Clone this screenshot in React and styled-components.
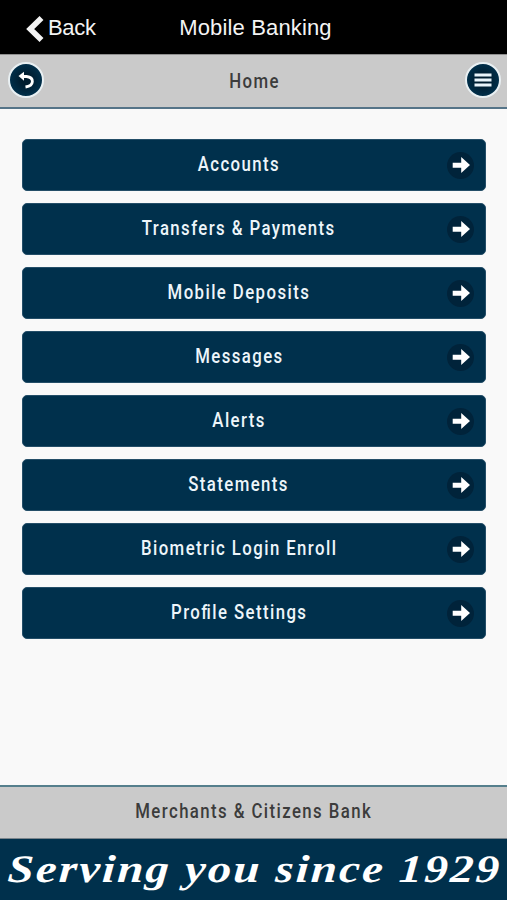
import React from 'react'
import styled, {createGlobalStyle} from 'styled-components'

const GlobalStyle = createGlobalStyle`
    * {
        box-sizing: border-box;
    }
    body {
        margin: 0;
        background-color: #f9f9f9;
    }
`

const Wrapper = styled.div`
    display: flex;
    flex-direction: column;
    height: 100vh;
    overflow: hidden;
    background-color: #f9f9f9;
`

const TopBar = styled.header`
    display: grid;
    grid-template-columns: 1fr auto 1fr;
    align-items: center;
    height: 54px;
    padding: 1px 0 0 26px;
    background-color: #000;
    color: #f4f4f4;
    font-family: 'Liberation Sans', Arial, sans-serif;
    font-size: 22px;
`

const BackButton = styled.button`
    display: flex;
    align-items: center;
    padding: 0;
    border: 0;
    background: none;
    color: inherit;
    font: inherit;
    letter-spacing: -0.3px;
    cursor: pointer;
    svg {
        margin: 3px 4px 0 0;
    }
`

const AppTitle = styled.h1`
    margin: 0;
    font-size: 22px;
    font-weight: 400;
    letter-spacing: 0.15px;
    transform: translateX(-11px);
`

const PageBar = styled.div`
    display: flex;
    align-items: center;
    justify-content: space-between;
    height: 55px;
    padding: 0 6.5px 2px 7.5px;
    border-top: 1px solid #8f8f8f;
    border-bottom: 2px solid #557488;
    background-color: #cacaca;
`

const RoundButton = styled.button`
    display: flex;
    align-items: center;
    justify-content: center;
    width: 36px;
    height: 36px;
    padding: 0;
    border: 2px solid #e9f0f3;
    border-radius: 50%;
    background: radial-gradient(#001c2e 20%, #00304c 75%);
    cursor: pointer;
`

// Condensed face made from the regular Roboto
const Label = styled.span`
    display: inline-block;
    font-family: 'Roboto', sans-serif;
    font-size: 19.5px;
    font-weight: 500;
    line-height: 24px;
    letter-spacing: 1.65px;
    white-space: nowrap;
    color: ${props => props.$light ? '#edf5fa' : '#3c3c3c'};
    transform: scaleX(0.86);
`

const PageTitle = styled(Label)`
    margin-top: 3px;
`

// closes the gap of the f and i pair
const Tight = styled.span`
    letter-spacing: -0.7px;
`

const Menu = styled.nav`
    display: flex;
    flex: 1;
    flex-direction: column;
    gap: 12px;
    padding: 30px 21px 0 22px;
`

const MenuButton = styled.button`
    display: grid;
    grid-template-columns: 20px 1fr 50px;
    align-items: center;
    justify-items: center;
    height: 52px;
    padding: 0;
    border: 1px solid #244e68;
    border-radius: 5px;
    background-color: #00304c;
    cursor: pointer;
    ${Label} {
        grid-column: 2;
    }
`

const ArrowBadge = styled.span`
    display: flex;
    width: 27px;
    height: 27px;
    border-radius: 50%;
    background-color: #00233a;
`

const BankBar = styled.div`
    display: flex;
    justify-content: center;
    height: 54px;
    padding-top: 13px;
    border-top: 2px solid #557f8c;
    border-bottom: 1px solid #7b858c;
    background-color: #cacaca;
`

const Slogan = styled.footer`
    display: flex;
    justify-content: center;
    height: 61px;
    background-color: #00304c;
    color: #fff;
    font-family: 'Liberation Serif', 'Times New Roman', serif;
    font-size: 39px;
    font-style: italic;
    font-weight: 700;
    line-height: 59px;
    white-space: nowrap;
    span {
        letter-spacing: 1.8px;
        transform: translateX(1px) scaleX(1.2) skewX(-3deg);
    }
`

const menuItems = [
    {id: 'accounts', label: 'Accounts'},
    {id: 'transfers', label: 'Transfers & Payments'},
    {id: 'deposits', label: 'Mobile Deposits'},
    {id: 'messages', label: 'Messages'},
    {id: 'alerts', label: 'Alerts'},
    {id: 'statements', label: 'Statements'},
    {id: 'biometric', label: 'Biometric Login Enroll'},
    {id: 'profile', label: <>Pro<Tight>f</Tight>ile Settings</>},
]

function App() {
    return (
        <Wrapper>
            <GlobalStyle />
            <TopBar>
                <BackButton>
                    <svg width="18" height="26" viewBox="0 0 18 26">
                        <path d="M15.5 2 L4.2 13 L15.5 24" fill="none" stroke="#f4f4f4" strokeWidth="5.6" />
                    </svg>
                    Back
                </BackButton>
                <AppTitle>Mobile Banking</AppTitle>
            </TopBar>
            <PageBar>
                <RoundButton aria-label="Back">
                    <svg width="18" height="18" viewBox="0 0 18 18">
                        <path d="M5 5.5 H9.5 C17.5 6.5 17.5 14.5 8.5 16" fill="none" stroke="#fff" strokeWidth="2.8" />
                        <path d="M1.5 5 L7 0.8 V9.8 Z" fill="#fff" />
                    </svg>
                </RoundButton>
                <PageTitle>Home</PageTitle>
                <RoundButton aria-label="Menu">
                    <svg width="18" height="14" viewBox="0 0 18 14">
                        <path d="M0.5 2 H17.5 M0.5 7 H17.5 M0.5 12 H17.5" stroke="#e9f5fb" strokeWidth="2.8" />
                    </svg>
                </RoundButton>
            </PageBar>
            <Menu>
                {menuItems.map(item => (
                    <MenuButton key={item.id}>
                        <Label $light>{item.label}</Label>
                        <ArrowBadge>
                            <svg width="27" height="27" viewBox="0 0 27 27">
                                <path d="M5.7 10.7 H14.2 V5 L23 13 L14.2 21 V15.7 H5.7 Z" fill="#fff" />
                            </svg>
                        </ArrowBadge>
                    </MenuButton>
                ))}
            </Menu>
            <BankBar>
                <Label>Merchants &amp; Citizens Bank</Label>
            </BankBar>
            <Slogan><span>Serving you since 1929</span></Slogan>
        </Wrapper>
    )
}

export default App
